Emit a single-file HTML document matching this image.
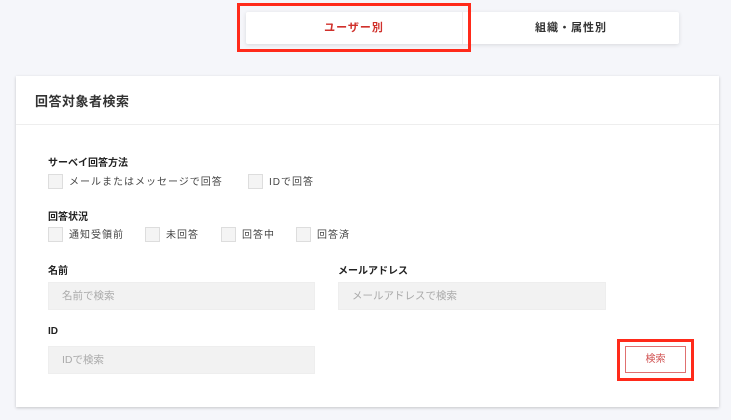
<!DOCTYPE html>
<html><head><meta charset="utf-8"><style>
*{margin:0;padding:0;box-sizing:border-box}
body{width:731px;height:420px;background:#f5f6fa;font-family:"Liberation Sans","Noto Sans CJK JP",sans-serif;position:relative;overflow:hidden;color:#333}
.a{position:absolute}
.tabs{left:246px;top:12px;width:433px;height:32px;background:#fff;box-shadow:0 1px 4px rgba(0,0,0,.12);border-radius:2px}
.tab{top:0;height:32px;line-height:32px;text-align:center;font-size:11px;font-weight:bold;letter-spacing:1px}
.hl{border:3px solid #ff2a1a}
.card{left:16px;top:76px;width:703px;height:331px;background:#fff;box-shadow:0 1px 3px rgba(0,0,0,.2)}
.lbl{font-size:10px;font-weight:bold;color:#222}
.cb{width:15px;height:15px;border:1px solid #ddd;background:#f4f4f4}
.ct{font-size:10px;color:#444;letter-spacing:1px}
.in{background:#f2f2f2;border:1px solid #eee;height:28px;font-size:10.5px;color:#aaa;padding-left:13px;line-height:26px}
</style></head><body>
<div class="a tabs">
 <div class="a tab" style="left:0;width:216px;color:#d0302b">ユーザー別</div>
 <div class="a" style="left:216px;top:0;width:1px;height:32px;background:#eee"></div>
 <div class="a tab" style="left:217px;width:216px;color:#333">組織・属性別</div>
</div>
<div class="a hl" style="left:237px;top:3px;width:234px;height:49px"></div>
<div class="a card">
 <div class="a" style="left:19px;top:15px;font-size:13px;font-weight:bold;color:#333;letter-spacing:0.5px">回答対象者検索</div>
 <div class="a" style="left:0;top:48px;width:703px;height:1px;background:#eee"></div>
</div>
<div class="a lbl" style="left:48px;top:154px">サーベイ回答方法</div>
<div class="a cb" style="left:48px;top:174px"></div><div class="a ct" style="left:69px;top:173px">メールまたはメッセージで回答</div>
<div class="a cb" style="left:248px;top:174px"></div><div class="a ct" style="left:269px;top:173px">IDで回答</div>
<div class="a lbl" style="left:48px;top:208px">回答状況</div>
<div class="a cb" style="left:48px;top:227px"></div><div class="a ct" style="left:69px;top:226px">通知受領前</div>
<div class="a cb" style="left:145px;top:227px"></div><div class="a ct" style="left:166px;top:226px">未回答</div>
<div class="a cb" style="left:221px;top:227px"></div><div class="a ct" style="left:242px;top:226px">回答中</div>
<div class="a cb" style="left:296px;top:227px"></div><div class="a ct" style="left:317px;top:226px">回答済</div>
<div class="a lbl" style="left:48px;top:262px">名前</div>
<div class="a in" style="left:48px;top:282px;width:267px">名前で検索</div>
<div class="a lbl" style="left:338px;top:262px">メールアドレス</div>
<div class="a in" style="left:338px;top:282px;width:268px">メールアドレスで検索</div>
<div class="a lbl" style="left:48px;top:326px">ID</div>
<div class="a in" style="left:48px;top:346px;width:267px">IDで検索</div>
<div class="a" style="left:625px;top:346px;width:61px;height:27px;border:1px solid #e07070;color:#d05050;font-size:10px;text-align:center;line-height:25px">検索</div>
<div class="a hl" style="left:617px;top:339px;width:77px;height:42px"></div>
</body></html>
